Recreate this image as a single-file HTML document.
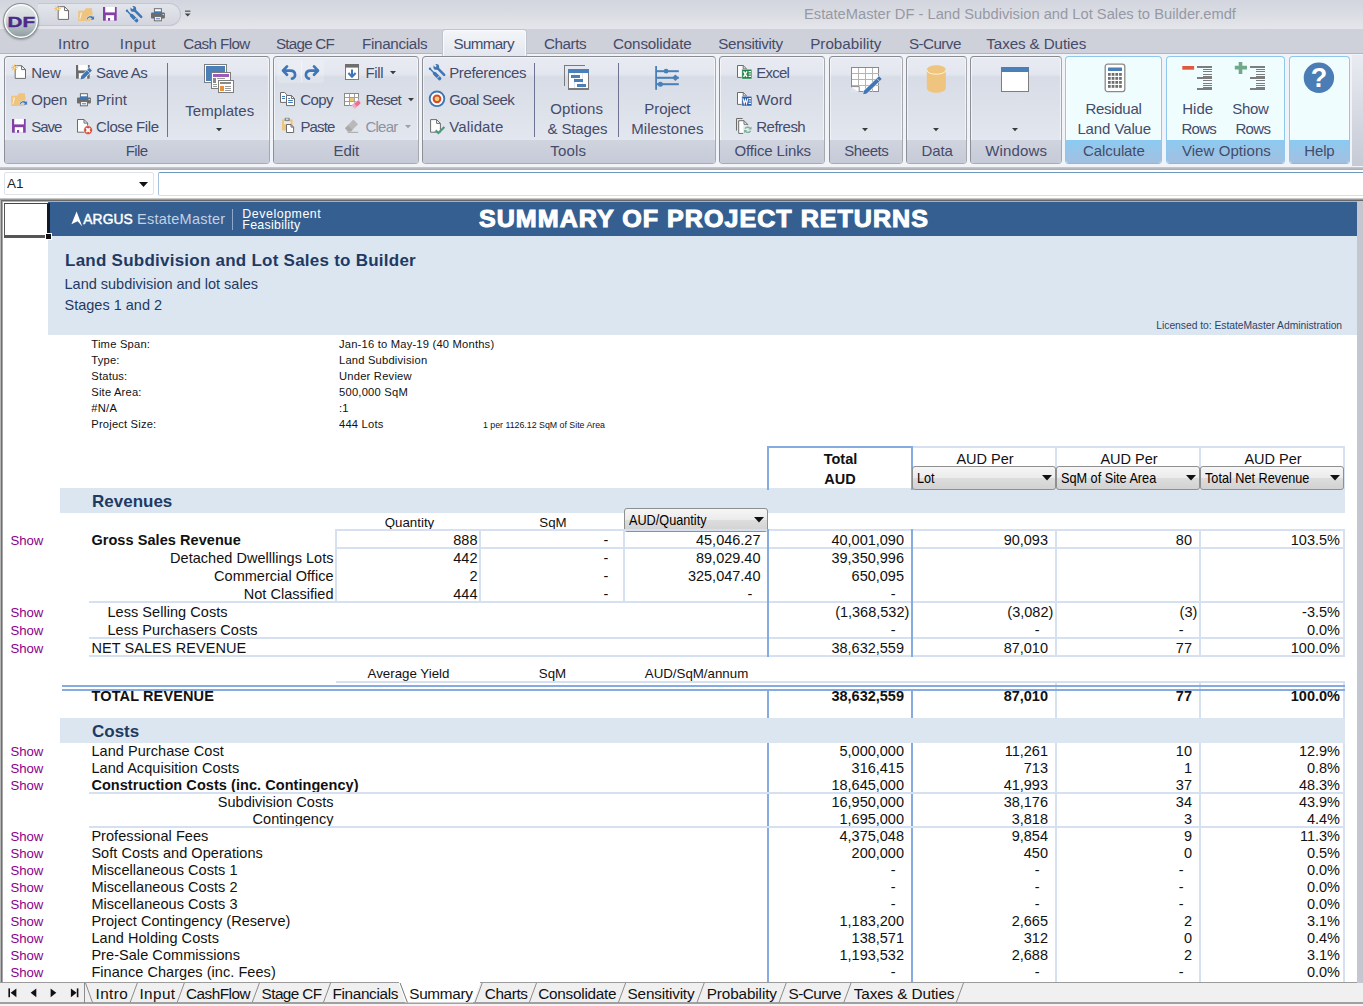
<!DOCTYPE html>
<html><head><meta charset="utf-8"><title>EstateMaster DF - Summary</title>
<style>
html,body{margin:0;padding:0}
body{width:1363px;height:1006px;overflow:hidden;position:relative;background:#fff;font-family:"Liberation Sans",sans-serif}
.t{position:absolute;white-space:pre;}
.r{position:absolute;}
svg{position:absolute;overflow:visible}
</style></head>
<body>
<div class="r" style="left:0px;top:0px;width:1363px;height:29px;background:linear-gradient(#d2d5dd 0,#dadce3 45%,#e4e6eb 100%);"></div>
<div class="r" style="left:0px;top:29px;width:1363px;height:25px;background:#ced1da;"></div>
<div class="r" style="left:0px;top:53px;width:1363px;height:1px;background:#b3b5bb;"></div>
<div class="r" style="left:0px;top:54px;width:1363px;height:113px;background:#f0f4f8;"></div>
<div class="r" style="left:1352px;top:55px;width:11px;height:111px;background:linear-gradient(#e8ebf1,#c6cad5);"></div>
<div class="r" style="left:0px;top:167px;width:1363px;height:3px;background:linear-gradient(#c8cacf,#a6a9b0);"></div>
<div class="r" style="left:0px;top:170px;width:1363px;height:28px;background:#fff;"></div>
<div class="t" style="left:804.00px;top:5px;font-size:14.7px;line-height:19px;color:#9699a5;letter-spacing:0.014px;">EstateMaster DF - Land Subdivision and Lot Sales to Builder.emdf</div>
<div class="r" style="left:38px;top:3px;width:143px;height:23px;background:linear-gradient(#e2e5eb,#d3d6de);border:1px solid #c2c6cf;border-left:none;border-radius:0 12px 12px 0;box-sizing:border-box"></div>
<div class="r" style="left:3.2px;top:2.8px;width:36px;height:36.6px;border-radius:50%;box-sizing:border-box;border:1px solid #8c8f93;background:linear-gradient(#e6eaec 0,#d4dadc 40%,#a9b4b8 75%,#8a999e 100%);box-shadow:inset 0 0 0 1.6px #fbfcfc, 0 1px 2px rgba(0,0,0,.25)"></div>
<div class="t" style="left:10.73px;top:12px;font-size:15.4px;line-height:20px;color:#4b2a8c;font-weight:700;transform:scaleX(1.34);-webkit-text-stroke:.4px #4b2a8c;">DF</div>
<div class="r" style="left:4px;top:172px;width:150px;height:23px;background:#fff;border:1px solid #dfe2e8;box-sizing:border-box;border-radius:2px"></div>
<div class="t" style="left:7.00px;top:175px;font-size:13.5px;line-height:18px;color:#222;">A1</div>
<svg style="left:139px;top:182px" width="10" height="6"><path d="M0 0h9L4.5 5z" fill="#111"/></svg>
<div class="r" style="left:158px;top:172px;width:1210px;height:24px;background:#fff;border:1px solid #a9c0dc;border-top-color:#6f9ac0;border-bottom-color:#d0e2f0;box-sizing:border-box;border-radius:2px"></div>
<div class="r" style="left:0px;top:201px;width:1363px;height:782px;background:#fff;"></div>
<div class="r" style="left:0px;top:198px;width:1363px;height:1px;background:#c8c8c8;"></div>
<div class="r" style="left:0px;top:199px;width:1363px;height:1px;background:#999;"></div>
<div class="r" style="left:0px;top:200px;width:1363px;height:1px;background:#686868;"></div>
<div class="r" style="left:0px;top:201px;width:1363px;height:1px;background:#b0b0b0;"></div>
<div class="r" style="left:0px;top:200px;width:1px;height:803px;background:#b5b5b5;"></div>
<div class="r" style="left:1px;top:200px;width:1px;height:803px;background:#6e6e6e;"></div>
<div class="r" style="left:2px;top:201px;width:1px;height:802px;background:#a8a8a8;"></div>
<div class="r" style="left:1357px;top:201px;width:6px;height:782px;background:#c4c7cf;"></div>
<div class="r" style="left:443px;top:30px;width:83px;height:26px;background:linear-gradient(#f3f5f8,#e3e7ee);border:1px solid #f8fbfd;border-bottom:none;border-radius:3px 3px 0 0;box-sizing:border-box;box-shadow:0 0 0 1px #bfc4ce"></div>
<div class="t" style="left:58.00px;top:34px;font-size:15.2px;line-height:20px;color:#454b6a;letter-spacing:0.202px;">Intro</div>
<div class="t" style="left:119.80px;top:34px;font-size:15.2px;line-height:20px;color:#454b6a;letter-spacing:0.484px;">Input</div>
<div class="t" style="left:183.30px;top:34px;font-size:15.2px;line-height:20px;color:#454b6a;letter-spacing:-0.594px;">Cash Flow</div>
<div class="t" style="left:276.00px;top:34px;font-size:15.2px;line-height:20px;color:#454b6a;letter-spacing:-0.770px;">Stage CF</div>
<div class="t" style="left:362.00px;top:34px;font-size:15.2px;line-height:20px;color:#454b6a;letter-spacing:-0.307px;">Financials</div>
<div class="t" style="left:453.50px;top:34px;font-size:15.2px;line-height:20px;color:#454b6a;letter-spacing:-0.641px;">Summary</div>
<div class="t" style="left:544.00px;top:34px;font-size:15.2px;line-height:20px;color:#454b6a;letter-spacing:-0.422px;">Charts</div>
<div class="t" style="left:613.00px;top:34px;font-size:15.2px;line-height:20px;color:#454b6a;letter-spacing:-0.156px;">Consolidate</div>
<div class="t" style="left:718.30px;top:34px;font-size:15.2px;line-height:20px;color:#454b6a;letter-spacing:-0.361px;">Sensitivity</div>
<div class="t" style="left:810.20px;top:34px;font-size:15.2px;line-height:20px;color:#454b6a;letter-spacing:0.016px;">Probability</div>
<div class="t" style="left:909.00px;top:34px;font-size:15.2px;line-height:20px;color:#454b6a;letter-spacing:-0.558px;">S-Curve</div>
<div class="t" style="left:986.30px;top:34px;font-size:15.2px;line-height:20px;color:#454b6a;letter-spacing:-0.100px;">Taxes &amp; Duties</div>
<div class="r" style="left:4px;top:56px;width:266px;height:108px;box-sizing:border-box;border:1px solid;border-color:#878a91 #a6a8ae #a9abb1 #8c8f96;border-radius:4px;background:linear-gradient(#e8ebf2 0,#e4e7ef 16%,#d7dce6 19%,#dce1ea 48%,#e2e7ef 77%);overflow:hidden;box-shadow:inset 0 0 0 1px rgba(255,255,255,.55)"><div class="r" style="left:0;top:83px;width:266px;height:24px;background:linear-gradient(#cfd4df,#c5cad7)"></div></div>
<div class="t" style="left:125.70px;top:141px;font-size:15px;line-height:20px;color:#454b6a;letter-spacing:-0.593px;">File</div>
<div class="r" style="left:273px;top:56px;width:146px;height:108px;box-sizing:border-box;border:1px solid;border-color:#878a91 #a6a8ae #a9abb1 #8c8f96;border-radius:4px;background:linear-gradient(#e8ebf2 0,#e4e7ef 16%,#d7dce6 19%,#dce1ea 48%,#e2e7ef 77%);overflow:hidden;box-shadow:inset 0 0 0 1px rgba(255,255,255,.55)"><div class="r" style="left:0;top:83px;width:146px;height:24px;background:linear-gradient(#cfd4df,#c5cad7)"></div></div>
<div class="t" style="left:333.50px;top:141px;font-size:15px;line-height:20px;color:#454b6a;letter-spacing:-0.090px;">Edit</div>
<div class="r" style="left:422px;top:56px;width:294px;height:108px;box-sizing:border-box;border:1px solid;border-color:#878a91 #a6a8ae #a9abb1 #8c8f96;border-radius:4px;background:linear-gradient(#e8ebf2 0,#e4e7ef 16%,#d7dce6 19%,#dce1ea 48%,#e2e7ef 77%);overflow:hidden;box-shadow:inset 0 0 0 1px rgba(255,255,255,.55)"><div class="r" style="left:0;top:83px;width:294px;height:24px;background:linear-gradient(#cfd4df,#c5cad7)"></div></div>
<div class="t" style="left:550.30px;top:141px;font-size:15px;line-height:20px;color:#454b6a;letter-spacing:0.174px;">Tools</div>
<div class="r" style="left:719px;top:56px;width:106px;height:108px;box-sizing:border-box;border:1px solid;border-color:#878a91 #a6a8ae #a9abb1 #8c8f96;border-radius:4px;background:linear-gradient(#e8ebf2 0,#e4e7ef 16%,#d7dce6 19%,#dce1ea 48%,#e2e7ef 77%);overflow:hidden;box-shadow:inset 0 0 0 1px rgba(255,255,255,.55)"><div class="r" style="left:0;top:83px;width:106px;height:24px;background:linear-gradient(#cfd4df,#c5cad7)"></div></div>
<div class="t" style="left:734.40px;top:141px;font-size:15px;line-height:20px;color:#454b6a;letter-spacing:-0.133px;">Office Links</div>
<div class="r" style="left:829px;top:56px;width:74px;height:108px;box-sizing:border-box;border:1px solid;border-color:#878a91 #a6a8ae #a9abb1 #8c8f96;border-radius:4px;background:linear-gradient(#e8ebf2 0,#e4e7ef 16%,#d7dce6 19%,#dce1ea 48%,#e2e7ef 77%);overflow:hidden;box-shadow:inset 0 0 0 1px rgba(255,255,255,.55)"><div class="r" style="left:0;top:83px;width:74px;height:24px;background:linear-gradient(#cfd4df,#c5cad7)"></div></div>
<div class="t" style="left:844.30px;top:141px;font-size:15px;line-height:20px;color:#454b6a;letter-spacing:-0.451px;">Sheets</div>
<div class="r" style="left:906px;top:56px;width:61px;height:108px;box-sizing:border-box;border:1px solid;border-color:#878a91 #a6a8ae #a9abb1 #8c8f96;border-radius:4px;background:linear-gradient(#e8ebf2 0,#e4e7ef 16%,#d7dce6 19%,#dce1ea 48%,#e2e7ef 77%);overflow:hidden;box-shadow:inset 0 0 0 1px rgba(255,255,255,.55)"><div class="r" style="left:0;top:83px;width:61px;height:24px;background:linear-gradient(#cfd4df,#c5cad7)"></div></div>
<div class="t" style="left:921.50px;top:141px;font-size:15px;line-height:20px;color:#454b6a;letter-spacing:-0.147px;">Data</div>
<div class="r" style="left:970px;top:56px;width:92px;height:108px;box-sizing:border-box;border:1px solid;border-color:#878a91 #a6a8ae #a9abb1 #8c8f96;border-radius:4px;background:linear-gradient(#e8ebf2 0,#e4e7ef 16%,#d7dce6 19%,#dce1ea 48%,#e2e7ef 77%);overflow:hidden;box-shadow:inset 0 0 0 1px rgba(255,255,255,.55)"><div class="r" style="left:0;top:83px;width:92px;height:24px;background:linear-gradient(#cfd4df,#c5cad7)"></div></div>
<div class="t" style="left:985.20px;top:141px;font-size:15px;line-height:20px;color:#454b6a;letter-spacing:0.163px;">Windows</div>
<div class="r" style="left:1065px;top:56px;width:97px;height:108px;box-sizing:border-box;border:1px solid;border-color:#8ec6ee #8ec6ee #aab0bc #8ec6ee;border-radius:4px;background:#f0fdff;overflow:hidden;box-shadow:inset 0 0 0 1px rgba(255,255,255,.55)"><div class="r" style="left:0;top:83px;width:97px;height:24px;background:linear-gradient(#8ccaf2,#a3bfde)"></div></div>
<div class="t" style="left:1083.00px;top:141px;font-size:15px;line-height:20px;color:#454b6a;letter-spacing:-0.094px;">Calculate</div>
<div class="r" style="left:1166px;top:56px;width:119px;height:108px;box-sizing:border-box;border:1px solid;border-color:#8ec6ee #8ec6ee #aab0bc #8ec6ee;border-radius:4px;background:#f0fdff;overflow:hidden;box-shadow:inset 0 0 0 1px rgba(255,255,255,.55)"><div class="r" style="left:0;top:83px;width:119px;height:24px;background:linear-gradient(#8ccaf2,#a3bfde)"></div></div>
<div class="t" style="left:1181.90px;top:141px;font-size:15px;line-height:20px;color:#454b6a;letter-spacing:0.074px;">View Options</div>
<div class="r" style="left:1289px;top:56px;width:61px;height:108px;box-sizing:border-box;border:1px solid;border-color:#8ec6ee #8ec6ee #aab0bc #8ec6ee;border-radius:4px;background:#f0fdff;overflow:hidden;box-shadow:inset 0 0 0 1px rgba(255,255,255,.55)"><div class="r" style="left:0;top:83px;width:61px;height:24px;background:linear-gradient(#8ccaf2,#a3bfde)"></div></div>
<div class="t" style="left:1304.20px;top:141px;font-size:15px;line-height:20px;color:#454b6a;letter-spacing:-0.115px;">Help</div>
<div class="r" style="left:167px;top:63px;width:1px;height:74px;background:#6d7391;"></div>
<div class="r" style="left:534px;top:63px;width:1px;height:74px;background:#6d7391;"></div>
<div class="r" style="left:618px;top:63px;width:1px;height:74px;background:#6d7391;"></div>
<div class="t" style="left:31.20px;top:63px;font-size:15px;line-height:20px;color:#454b6a;letter-spacing:-0.205px;">New</div>
<div class="t" style="left:31.20px;top:90px;font-size:15px;line-height:20px;color:#454b6a;letter-spacing:-0.176px;">Open</div>
<div class="t" style="left:31.20px;top:117px;font-size:15px;line-height:20px;color:#454b6a;letter-spacing:-1.051px;">Save</div>
<div class="t" style="left:96.10px;top:63px;font-size:15px;line-height:20px;color:#454b6a;letter-spacing:-0.578px;">Save As</div>
<div class="t" style="left:96.10px;top:90px;font-size:15px;line-height:20px;color:#454b6a;letter-spacing:0.011px;">Print</div>
<div class="t" style="left:96.10px;top:117px;font-size:15px;line-height:20px;color:#454b6a;letter-spacing:-0.419px;">Close File</div>
<div class="t" style="left:300.30px;top:90px;font-size:15px;line-height:20px;color:#454b6a;letter-spacing:-0.583px;">Copy</div>
<div class="t" style="left:300.50px;top:117px;font-size:15px;line-height:20px;color:#454b6a;letter-spacing:-0.892px;">Paste</div>
<div class="t" style="left:365.40px;top:63px;font-size:15px;line-height:20px;color:#454b6a;letter-spacing:-0.318px;">Fill</div>
<div class="t" style="left:365.40px;top:90px;font-size:15px;line-height:20px;color:#454b6a;letter-spacing:-0.717px;">Reset</div>
<div class="t" style="left:449.20px;top:63px;font-size:15px;line-height:20px;color:#454b6a;letter-spacing:-0.352px;">Preferences</div>
<div class="t" style="left:449.20px;top:90px;font-size:15px;line-height:20px;color:#454b6a;letter-spacing:-0.550px;">Goal Seek</div>
<div class="t" style="left:449.20px;top:117px;font-size:15px;line-height:20px;color:#454b6a;letter-spacing:0.138px;">Validate</div>
<div class="t" style="left:756.30px;top:63px;font-size:15px;line-height:20px;color:#454b6a;letter-spacing:-0.797px;">Excel</div>
<div class="t" style="left:756.30px;top:90px;font-size:15px;line-height:20px;color:#454b6a;letter-spacing:0.080px;">Word</div>
<div class="t" style="left:756.30px;top:117px;font-size:15px;line-height:20px;color:#454b6a;letter-spacing:-0.519px;">Refresh</div>
<div class="t" style="left:365.40px;top:117px;font-size:15px;line-height:20px;color:#8d92a3;letter-spacing:-0.732px;">Clear</div>
<div class="t" style="left:185.30px;top:101px;font-size:15px;line-height:20px;color:#454b6a;letter-spacing:0.069px;">Templates</div>
<div class="t" style="left:550.30px;top:99px;font-size:15px;line-height:20px;color:#454b6a;letter-spacing:0.157px;">Options</div>
<div class="t" style="left:547.50px;top:119px;font-size:15px;line-height:20px;color:#454b6a;letter-spacing:-0.134px;">&amp; Stages</div>
<div class="t" style="left:644.30px;top:99px;font-size:15px;line-height:20px;color:#454b6a;letter-spacing:-0.084px;">Project</div>
<div class="t" style="left:631.30px;top:119px;font-size:15px;line-height:20px;color:#454b6a;letter-spacing:0.050px;">Milestones</div>
<div class="t" style="left:1085.50px;top:99px;font-size:15px;line-height:20px;color:#454b6a;letter-spacing:-0.297px;">Residual</div>
<div class="t" style="left:1077.40px;top:119px;font-size:15px;line-height:20px;color:#454b6a;letter-spacing:-0.110px;">Land Value</div>
<div class="t" style="left:1182.30px;top:99px;font-size:15px;line-height:20px;color:#454b6a;letter-spacing:-0.015px;">Hide</div>
<div class="t" style="left:1181.60px;top:119px;font-size:15px;line-height:20px;color:#454b6a;letter-spacing:-0.804px;">Rows</div>
<div class="t" style="left:1232.20px;top:99px;font-size:15px;line-height:20px;color:#454b6a;letter-spacing:-0.258px;">Show</div>
<div class="t" style="left:1235.40px;top:119px;font-size:15px;line-height:20px;color:#454b6a;letter-spacing:-0.629px;">Rows</div>
<svg style="left:53.7px;top:5.2px" width="16" height="16" viewBox="0 0 16 16"><path d="M4.2 1.7H10.6L14.5 5.6V14.4H4.2Z" fill="#fff" stroke="#6c6c6c"/><path d="M10.6 1.7V5.6H14.5" fill="none" stroke="#6c6c6c"/><g stroke="#f0bd6a" stroke-width="1"><line x1="3.5" y1="3.7" x2="6.90" y2="3.70"/><line x1="3.5" y1="3.7" x2="0.10" y2="3.70"/><line x1="3.5" y1="3.7" x2="3.50" y2="7.10"/><line x1="3.5" y1="3.7" x2="3.50" y2="0.30"/><line x1="3.5" y1="3.7" x2="5.88" y2="6.08"/><line x1="3.5" y1="3.7" x2="1.12" y2="6.08"/><line x1="3.5" y1="3.7" x2="5.88" y2="1.32"/><line x1="3.5" y1="3.7" x2="1.12" y2="1.32"/></g><circle cx="3.5" cy="3.7" r="1.7" fill="#f0bd6a"/><circle cx="3.5" cy="3.7" r=".7" fill="#fbe9c8"/></svg>
<svg style="left:78px;top:6.6px" width="17" height="16" viewBox="0 0 17 16"><path d="M0.2 14.1V3.8H6.2L7.9 1.2H14V4.6H14.6L14.2 14.1Z" fill="#eec47e"/><path d="M1.4 12.6L2.6 5.6H4L2.2 12.6Z" fill="#fbf1de"/><path d="M8.2 13.2C8.6 9 12.6 7.6 15.2 9.6L16.4 8.2V13H11.8L13.4 11.4C11.8 10.2 9.8 11 9.6 13.2Z" fill="#3f76b5" stroke="#e4e8f0" stroke-width=".7"/></svg>
<svg style="left:102.3px;top:6.1px" width="16" height="16" viewBox="0 0 16 16"><rect x="1" y="1" width="13.7" height="13.7" fill="#8241a6"/><rect x="3.2" y="1" width="9.7" height="5.4" fill="#fff"/><rect x="3.8" y="9.2" width="8.3" height="5.5" fill="#fff"/><rect x="6" y="12" width="2.1" height="2.7" fill="#8241a6"/></svg>
<svg style="left:126px;top:5.9px" width="17" height="17" viewBox="0 0 17 17"><g fill="none" stroke="#3f76b5" stroke-linecap="round"><path d="M9 4.6L15.2 10.8" stroke-width="2.5"/><path d="M1 4.8L5 9" stroke-width="1.4"/><path d="M5.6 9.6L10.6 14.6" stroke-width="3.5"/></g><circle cx="7.3" cy="2.9" r="2.9" fill="#3f76b5"/><path d="M7 2.6L4.6 -0.4" stroke="#e3e7ee" stroke-width="2"/><circle cx="1" cy="4.7" r="1.2" fill="#3f76b5"/><path d="M8 14.4L10.5 11.9" stroke="#e8ebf1" stroke-width=".9"/></svg>
<svg style="left:150px;top:7px" width="16" height="16" viewBox="0 0 16 16"><rect x="1" y="5.4" width="13.9" height="6" rx="1" fill="#6c6c6c"/><rect x="4.4" y="1.7" width="7" height="5" fill="#fff" stroke="#6c6c6c"/><rect x="4" y="4.3" width="7.8" height="2.6" fill="#3f76b5"/><rect x="4.4" y="9.6" width="7" height="4.2" fill="#fff" stroke="#6c6c6c"/><rect x="5.8" y="11.3" width="4.2" height="1" fill="#3f76b5"/><circle cx="13.2" cy="7.6" r=".7" fill="#fff"/></svg>
<svg style="left:184px;top:9px" width="8" height="9" viewBox="0 0 8 9"><rect x="1" y="1.6" width="5.4" height="1.1" fill="#444"/><path d="M0.8 4.4H6.6L3.7 7.6Z" fill="#444"/></svg>
<svg style="left:11px;top:64px" width="16" height="16" viewBox="0 0 16 16"><path d="M4.2 1.7H10.6L14.5 5.6V14.4H4.2Z" fill="#fff" stroke="#6c6c6c"/><path d="M10.6 1.7V5.6H14.5" fill="none" stroke="#6c6c6c"/><g stroke="#f0bd6a" stroke-width="1"><line x1="3.5" y1="3.7" x2="6.90" y2="3.70"/><line x1="3.5" y1="3.7" x2="0.10" y2="3.70"/><line x1="3.5" y1="3.7" x2="3.50" y2="7.10"/><line x1="3.5" y1="3.7" x2="3.50" y2="0.30"/><line x1="3.5" y1="3.7" x2="5.88" y2="6.08"/><line x1="3.5" y1="3.7" x2="1.12" y2="6.08"/><line x1="3.5" y1="3.7" x2="5.88" y2="1.32"/><line x1="3.5" y1="3.7" x2="1.12" y2="1.32"/></g><circle cx="3.5" cy="3.7" r="1.7" fill="#f0bd6a"/><circle cx="3.5" cy="3.7" r=".7" fill="#fbe9c8"/></svg>
<svg style="left:10.9px;top:92px" width="17" height="16" viewBox="0 0 17 16"><path d="M0.2 14.1V3.8H6.2L7.9 1.2H14V4.6H14.6L14.2 14.1Z" fill="#eec47e"/><path d="M1.4 12.6L2.6 5.6H4L2.2 12.6Z" fill="#fbf1de"/><path d="M8.2 13.2C8.6 9 12.6 7.6 15.2 9.6L16.4 8.2V13H11.8L13.4 11.4C11.8 10.2 9.8 11 9.6 13.2Z" fill="#3f76b5" stroke="#e4e8f0" stroke-width=".7"/></svg>
<svg style="left:11.2px;top:118px" width="16" height="16" viewBox="0 0 16 16"><rect x="1" y="1" width="13.7" height="13.7" fill="#8241a6"/><rect x="3.2" y="1" width="9.7" height="5.4" fill="#fff"/><rect x="3.8" y="9.2" width="8.3" height="5.5" fill="#fff"/><rect x="6" y="12" width="2.1" height="2.7" fill="#8241a6"/></svg>
<svg style="left:75px;top:64.2px" width="16" height="16" viewBox="0 0 16 16"><rect x="1" y="1" width="13.7" height="13.7" fill="#6c6c6c"/><rect x="3.2" y="1" width="9.7" height="5.4" fill="#fff"/><rect x="3.8" y="9.2" width="8.3" height="5.5" fill="#fff"/><rect x="6" y="12" width="2.1" height="2.7" fill="#6c6c6c"/></svg>
<svg style="left:75px;top:64.2px" width="18" height="17" viewBox="0 0 18 17"><path d="M5.60 15.40L9.06 14.59L16.96 6.53L14.24 3.87L6.34 11.93Z" fill="#3f76b5" stroke="#dfe3eb" stroke-width="1.2" paint-order="stroke"/><path d="M14.72 8.82L12.00 6.15" stroke="#dfe3eb" stroke-width=".8"/></svg>
<svg style="left:76px;top:92px" width="16" height="16" viewBox="0 0 16 16"><rect x="1" y="5.4" width="13.9" height="6" rx="1" fill="#6c6c6c"/><rect x="4.4" y="1.7" width="7" height="5" fill="#fff" stroke="#6c6c6c"/><rect x="4" y="4.3" width="7.8" height="2.6" fill="#3f76b5"/><rect x="4.4" y="9.6" width="7" height="4.2" fill="#fff" stroke="#6c6c6c"/><rect x="5.8" y="11.3" width="4.2" height="1" fill="#3f76b5"/><circle cx="13.2" cy="7.6" r=".7" fill="#fff"/></svg>
<svg style="left:76px;top:118px" width="18" height="18" viewBox="0 0 18 18"><path d="M1.5 1.5H8L11.6 5.1V14.2H1.5Z" fill="#fff" stroke="#6c6c6c"/><path d="M8 1.5V5.1H11.6" fill="none" stroke="#6c6c6c"/><circle cx="12.1" cy="12.1" r="4.3" fill="#d8452d" stroke="#e4e8f0" stroke-width=".6"/><path d="M10.2 10.2L14 14M14 10.2L10.2 14" stroke="#fff" stroke-width="1.9"/></svg>
<svg style="left:203px;top:63px" width="33" height="31" viewBox="0 0 33 31"><g shape-rendering="crispEdges"><rect x="1.5" y="1.5" width="22" height="18" fill="#fff" stroke="#7d7d7d"/><rect x="3" y="3" width="19" height="15" fill="#4a7fb8"/><rect x="8.5" y="9.5" width="19" height="16" fill="#fff" stroke="#7d7d7d"/><rect x="10" y="11" width="16" height="3" fill="#9a5cb6"/><rect x="10" y="15" width="3" height="5" fill="#8a8a8a"/><rect x="14" y="15" width="8" height="1" fill="#9a9a9a"/><rect x="10" y="21" width="4" height="1" fill="#9a9a9a"/><rect x="10" y="23" width="4" height="1" fill="#9a9a9a"/><rect x="15.5" y="17.5" width="15" height="12" fill="#fff" stroke="#7d7d7d"/><rect x="17" y="19" width="11" height="2" fill="#8a8a8a"/><rect x="17" y="23" width="4" height="5" fill="#e8913e"/><rect x="22" y="23" width="6" height="1" fill="#9a9a9a"/><rect x="22" y="25" width="6" height="1" fill="#9a9a9a"/><rect x="22" y="27" width="6" height="1" fill="#9a9a9a"/></g></svg>
<svg style="left:215.7px;top:128px" width="7" height="4" viewBox="0 0 7 4"><path d="M0 0H6L3 3.2Z" fill="#3a3a3a"/></svg>
<div class="r" style="left:277px;top:60px;width:47px;height:23px;background:rgba(255,255,255,.18);border-radius:2px"></div>
<div class="r" style="left:301px;top:61px;width:1px;height:21px;background:rgba(255,255,255,.45);"></div>
<svg style="left:281px;top:64px" width="16" height="16" viewBox="0 0 16 16"><path d="M6 2.4L2 6.6L6 10.8" fill="none" stroke="#3f76b5" stroke-width="2.7" stroke-linejoin="round" stroke-linecap="round"/><path d="M2.6 6.6H9.6C15.2 6.6 15.4 14 11 14.6" fill="none" stroke="#3f76b5" stroke-width="2.7" stroke-linecap="round"/></svg>
<svg style="left:304px;top:64px" width="16" height="16" viewBox="0 0 16 16"><path d="M10 2.4L14 6.6L10 10.8" fill="none" stroke="#3f76b5" stroke-width="2.7" stroke-linejoin="round" stroke-linecap="round"/><path d="M13.4 6.6H6.4C0.8 6.6 0.6 14 5 14.6" fill="none" stroke="#3f76b5" stroke-width="2.7" stroke-linecap="round"/></svg>
<svg style="left:344px;top:63px" width="16" height="18" viewBox="0 0 16 18"><rect x="1.5" y="1.5" width="13" height="15" fill="#fff" stroke="#7a7a7a"/><rect x="1" y="1" width="14" height="3.6" fill="#6e6e6e"/><path d="M8 6.4V13.4M4.4 10L8 13.8L11.6 10" fill="none" stroke="#3f76b5" stroke-width="2"/></svg>
<svg style="left:390px;top:71px" width="7" height="4" viewBox="0 0 7 4"><path d="M0 0H6L3 3.2Z" fill="#3a3a3a"/></svg>
<svg style="left:279px;top:91px" width="17" height="16" viewBox="0 0 17 16"><path d="M1.5 1.5H5.6L8.4 4.2V11.4H1.5Z" fill="#fff" stroke="#6c6c6c"/><path d="M3 5.5H6M3 7.5H6" stroke="#3f76b5"/><path d="M7.5 4.5H12.4L15.5 7.6V14.6H7.5Z" fill="#fff" stroke="#6c6c6c"/><path d="M12.4 4.5V7.6H15.5" fill="none" stroke="#6c6c6c"/><path d="M9.2 9.5H13.8M9.2 11.5H13.8M9.2 7.5H11" stroke="#3f76b5"/></svg>
<svg style="left:343px;top:92px" width="18" height="16" viewBox="0 0 18 16"><g shape-rendering="crispEdges"><rect x="1.5" y="1.5" width="14" height="12" fill="#fff" stroke="#8a8a8a"/><path d="M6.5 1.5V13.5M11.5 1.5V13.5M1.5 5.5H15.5M1.5 9.5H15.5" stroke="#a0a0a0" fill="none"/><rect x="7" y="6" width="4" height="3" fill="#f0c36e"/></g><g transform="rotate(-40 13.6 12.2)"><rect x="9.2" y="9.9" width="8.8" height="4.6" rx="1.2" fill="#ee6d93" stroke="#e4e8f0" stroke-width=".7"/><rect x="9.2" y="9.9" width="3" height="4.6" rx="1" fill="#f6a9c0"/></g></svg>
<svg style="left:407.6px;top:98px" width="7" height="4" viewBox="0 0 7 4"><path d="M0 0H6L3 3.2Z" fill="#3a3a3a"/></svg>
<svg style="left:281px;top:117px" width="15" height="17" viewBox="0 0 15 17"><rect x="1" y="2.4" width="10.6" height="11" fill="#eec47e"/><rect x="3.6" y="0.8" width="5.2" height="3.4" rx="1" fill="#8a8a8a"/><rect x="5" y="1.6" width="2.4" height="1.2" fill="#e4e8f0"/><rect x="3" y="4.2" width="6.6" height="3" fill="#e4e8f0"/><path d="M5.5 7.5H10L12.6 10.1V15.5H5.5Z" fill="#fff" stroke="#6c6c6c"/><path d="M10 7.5V10.1H12.6" fill="none" stroke="#6c6c6c"/></svg>
<svg style="left:343px;top:118px" width="17" height="16" viewBox="0 0 17 16"><path d="M2 10L10.4 1.6L15 6.2L8 13.2H4.6Z" fill="#b9b9b9"/><path d="M2.2 10.2L5 7.4L9.6 12L8 13.4H4.8Z" fill="#a9a9a9"/><rect x="4.6" y="13.8" width="10.6" height="1" fill="#a5a5a5"/></svg>
<svg style="left:404.8px;top:125px" width="7" height="4" viewBox="0 0 7 4"><path d="M0 0H6L3 3.2Z" fill="#9a9ead"/></svg>
<svg style="left:428.9px;top:64.1px" width="17" height="17" viewBox="0 0 17 17"><g fill="none" stroke="#3f76b5" stroke-linecap="round"><path d="M9 4.6L15.2 10.8" stroke-width="2.5"/><path d="M1 4.8L5 9" stroke-width="1.4"/><path d="M5.6 9.6L10.6 14.6" stroke-width="3.5"/></g><circle cx="7.3" cy="2.9" r="2.9" fill="#3f76b5"/><path d="M7 2.6L4.6 -0.4" stroke="#e3e7ee" stroke-width="2"/><circle cx="1" cy="4.7" r="1.2" fill="#3f76b5"/><path d="M8 14.4L10.5 11.9" stroke="#e8ebf1" stroke-width=".9"/></svg>
<svg style="left:428px;top:90px" width="18" height="18" viewBox="0 0 18 18"><circle cx="9" cy="8.8" r="7.3" fill="#fff" stroke="#3f76b5" stroke-width="1.9"/><circle cx="9" cy="8.8" r="3.4" fill="#f0d070" stroke="#d8492a" stroke-width="2"/></svg>
<svg style="left:429px;top:118px" width="18" height="18" viewBox="0 0 18 18"><path d="M1.6 1.6H7.6L11.4 5.4V14.2H1.6Z" fill="#fff" stroke="#6c6c6c"/><path d="M7.6 1.6V5.4H11.4" fill="none" stroke="#6c6c6c"/><path d="M6.6 12.4L9.4 15L15.4 9" fill="none" stroke="#4b9a7c" stroke-width="2.2"/><path d="M5.6 13L7.2 14.6" stroke="#9a9a9a" stroke-width="1"/></svg>
<svg style="left:564px;top:65px" width="26" height="26" viewBox="0 0 26 26"><g shape-rendering="crispEdges"><path d="M0.5 21V0.5H21" fill="none" stroke="#7a7a7a"/><rect x="4.5" y="4.5" width="20" height="19" fill="#fff" stroke="#7a7a7a"/><rect x="4" y="23" width="21" height="2" fill="#7a7a7a"/><rect x="4" y="4" width="21" height="4" fill="#4a7fb8"/><path d="M10.5 8V23M18.5 8V23" stroke="#dfe6ef"/><rect x="7" y="10" width="9" height="3" fill="#4a7fb8"/><rect x="10" y="14" width="9" height="3" fill="#4a7fb8"/><rect x="13" y="19" width="9" height="3" fill="#4a7fb8"/></g></svg>
<svg style="left:654px;top:65px" width="27" height="26" viewBox="0 0 27 26"><rect x="1.2" y="1" width="1.8" height="23.8" fill="#4a7fb8"/><g fill="#4a7fb8"><rect x="3" y="5.2" width="21.8" height="2"/><rect x="3" y="11.8" width="21.8" height="2"/><rect x="3" y="18.2" width="21.8" height="2"/><circle cx="12.1" cy="6.2" r="2.4"/><path d="M21.4 9.6L24.8 12.8L21.4 16L18 12.8Z"/><circle cx="6.4" cy="19.2" r="2.5"/></g></svg>
<svg style="left:736px;top:64px" width="17" height="16" viewBox="0 0 17 16"><path d="M1.5 1.5H7.2L10.6 4.9V13.4H1.5Z" fill="#fff" stroke="#6c6c6c"/><path d="M7.2 1.5V4.9H10.6" fill="none" stroke="#6c6c6c"/><rect x="5.9" y="5.2" width="10" height="9.8" fill="#1f8448" stroke="#e4e8f0" stroke-width=".5"/><path d="M7.6 7.4L11 12.8M11 7.4L7.6 12.8" stroke="#fff" stroke-width="1.5"/><path d="M12.6 7.6H15M12.6 10H15M12.6 12.4H15" stroke="#fff" stroke-width="1.2"/></svg>
<svg style="left:736px;top:91px" width="17" height="16" viewBox="0 0 17 16"><path d="M1.5 1.5H7.2L10.6 4.9V13.4H1.5Z" fill="#fff" stroke="#6c6c6c"/><path d="M7.2 1.5V4.9H10.6" fill="none" stroke="#6c6c6c"/><rect x="5.9" y="5.2" width="10" height="9.8" fill="#2b5dab" stroke="#e4e8f0" stroke-width=".5"/><path d="M7 7.4L8.2 12.6L9.4 8.6L10.6 12.6L11.8 7.4" fill="none" stroke="#fff" stroke-width="1.1"/><path d="M12.6 7.6H15M12.6 10H15M12.6 12.4H15" stroke="#fff" stroke-width="1.2"/></svg>
<svg style="left:735px;top:117px" width="18" height="18" viewBox="0 0 18 18"><path d="M1.5 13.6V1.5H7.6" fill="none" stroke="#6c6c6c"/><path d="M3.7 3.7H9L12.6 7.3V16.4H3.7Z" fill="#fff" stroke="#6c6c6c"/><path d="M9 3.7V7.3H12.6" fill="none" stroke="#6c6c6c"/><rect x="8.2" y="8.2" width="9" height="9" fill="#e4e8f0"/><path d="M9.4 11.6C10.2 9 14 8.8 15.4 10.6L16.6 9.4V12.6H13.4L14.4 11.6C13.4 10.6 11.4 10.6 10.8 12Z" fill="#7fb39b"/><path d="M16.2 14C15.4 16.6 11.6 16.8 10.2 15L9 16.2V13H12.2L11.2 14C12.2 15 14.2 15 14.8 13.6Z" fill="#7fb39b"/></svg>
<svg style="left:850px;top:66px" width="32" height="30" viewBox="0 0 32 30"><g shape-rendering="crispEdges"><path d="M1.5 1.5H28.5V25.5H8.5L1.5 25.5Z" fill="#fff" stroke="#8a8a8a"/><path d="M8.5 1.5V25.5M15.5 1.5V25.5M22.5 1.5V25.5M1.5 7.5H28.5M1.5 13.5H28.5M1.5 19.5H28.5" stroke="#b4b4b4" fill="none"/></g><path d="M1 21L9.4 26.2H1Z" fill="#dfe3eb"/><path d="M1.5 20.6H9.2V26" fill="#fff" stroke="#8a8a8a" stroke-width="1"/><path d="M13.20 28.20L16.68 27.48L31.72 12.97L29.08 10.23L14.04 24.75Z" fill="#3f76b5" stroke="#dfe3eb" stroke-width="1.2" paint-order="stroke"/><path d="M29.42 15.19L26.78 12.46" stroke="#dfe3eb" stroke-width=".8"/></svg>
<svg style="left:861.8px;top:128px" width="7" height="4" viewBox="0 0 7 4"><path d="M0 0H6L3 3.2Z" fill="#3a3a3a"/></svg>
<svg style="left:926px;top:64px" width="21" height="30" viewBox="0 0 21 30"><path d="M0.8 6C0.8 -0.4 19.8 -0.4 19.8 6V24C19.8 30.4 0.8 30.4 0.8 24Z" fill="#eec47e"/><path d="M0.8 6C0.8 11.6 19.8 11.6 19.8 6" fill="none" stroke="#fbf3e2" stroke-width="1"/></svg>
<svg style="left:932.6px;top:128px" width="7" height="4" viewBox="0 0 7 4"><path d="M0 0H6L3 3.2Z" fill="#3a3a3a"/></svg>
<svg style="left:1000px;top:66px" width="30" height="27" viewBox="0 0 30 27"><g shape-rendering="crispEdges"><rect x="1.5" y="1.5" width="27" height="24" fill="#fff" stroke="#7d7d7d"/><rect x="1" y="1" width="28" height="5" fill="#4a7fb8"/></g></svg>
<svg style="left:1011.8px;top:128px" width="7" height="4" viewBox="0 0 7 4"><path d="M0 0H6L3 3.2Z" fill="#3a3a3a"/></svg>
<svg style="left:1104px;top:63px" width="22" height="30" viewBox="0 0 22 30"><rect x="1.2" y="1.2" width="19.6" height="27.4" rx="2.4" fill="#fff" stroke="#8a8a8a" stroke-width="1.3"/><rect x="4" y="4.4" width="14" height="3.6" rx=".6" fill="#4a7fb8"/><g fill="#6e6e6e"><rect x="4.0" y="10" width="2.7" height="2.8"/><rect x="4.0" y="14" width="2.7" height="2.8"/><rect x="4.0" y="18" width="2.7" height="2.8"/><rect x="4.0" y="22" width="2.7" height="2.8"/><rect x="7.7" y="10" width="2.7" height="2.8"/><rect x="7.7" y="14" width="2.7" height="2.8"/><rect x="7.7" y="18" width="2.7" height="2.8"/><rect x="7.7" y="22" width="2.7" height="2.8"/><rect x="11.4" y="10" width="2.7" height="2.8"/><rect x="11.4" y="14" width="2.7" height="2.8"/><rect x="11.4" y="18" width="2.7" height="2.8"/><rect x="11.4" y="22" width="2.7" height="2.8"/><rect x="15.1" y="10" width="2.7" height="2.8"/><rect x="15.1" y="14" width="2.7" height="2.8"/><rect x="15.1" y="18" width="2.7" height="2.8"/><rect x="15.1" y="22" width="2.7" height="2.8"/></g></svg>
<svg style="left:1182px;top:65px" width="13" height="6" viewBox="0 0 13 6"><rect x="0.3" y="1" width="11.8" height="3.7" fill="#e05b3d"/></svg>
<svg style="left:1196.3px;top:65.6px" width="17" height="25" viewBox="0 0 17 25"><g fill="#7d7d7d" shape-rendering="crispEdges"><rect x="0.6" y="0.4" width="15" height="2"/><rect x="0.6" y="11.4" width="15" height="2"/><rect x="0.6" y="22.4" width="15" height="2"/><rect x="7" y="3.2" width="8.6" height="1"/><rect x="7" y="5.4" width="8.6" height="1"/><rect x="7" y="7.6" width="8.6" height="1"/><rect x="7" y="9.6" width="8.6" height="1"/><rect x="7" y="14.4" width="8.6" height="1"/><rect x="7" y="16.6" width="8.6" height="1"/><rect x="7" y="18.6" width="8.6" height="1"/><rect x="7" y="20.6" width="8.6" height="1"/></g></svg>
<svg style="left:1234px;top:61px" width="14" height="14" viewBox="0 0 14 14"><path d="M4.7 1H8.3V4.8H13V8.4H8.3V13H4.7V8.4H0.8V4.8H4.7Z" fill="#6fa98a"/></svg>
<svg style="left:1249.4px;top:65.6px" width="17" height="25" viewBox="0 0 17 25"><g fill="#7d7d7d" shape-rendering="crispEdges"><rect x="0.6" y="0.4" width="15" height="2"/><rect x="0.6" y="11.4" width="15" height="2"/><rect x="0.6" y="22.4" width="15" height="2"/><rect x="7" y="3.2" width="8.6" height="1"/><rect x="7" y="5.4" width="8.6" height="1"/><rect x="7" y="7.6" width="8.6" height="1"/><rect x="7" y="9.6" width="8.6" height="1"/><rect x="7" y="14.4" width="8.6" height="1"/><rect x="7" y="16.6" width="8.6" height="1"/><rect x="7" y="18.6" width="8.6" height="1"/><rect x="7" y="20.6" width="8.6" height="1"/></g></svg>
<svg style="left:1303px;top:62px" width="32" height="32" viewBox="0 0 32 32"><circle cx="15.9" cy="15.8" r="15.2" fill="#4a7cb5"/></svg>
<div class="t" style="left:1310.65px;top:61px;font-size:27px;line-height:35px;color:#fff;font-weight:700;">?</div>
<div class="r" style="left:48px;top:202px;width:1309px;height:34px;background:#365f91;"></div>
<div class="r" style="left:48px;top:236px;width:1309px;height:99px;background:#dce6f1;"></div>
<div class="r" style="left:4px;top:203px;width:46px;height:35px;background:#fff;box-sizing:border-box;border-top:1px solid #444;border-left:1px solid #555;border-bottom:3px solid #555;border-right:3px solid #131a26"></div>
<div class="r" style="left:45px;top:233px;width:7px;height:7px;background:#fff;"></div>
<div class="r" style="left:46px;top:234px;width:5px;height:5px;background:#111;"></div>
<div class="t" style="left:478.50px;top:204px;font-size:23px;line-height:30px;color:#fff;font-weight:700;letter-spacing:0.937px;-webkit-text-stroke:1px #fff;transform:scaleX(1.09);transform-origin:0 0;">SUMMARY OF PROJECT RETURNS</div>
<div class="t" style="left:65.00px;top:250px;font-size:17px;line-height:22px;color:#1f3a63;font-weight:700;letter-spacing:0.244px;">Land Subdivision and Lot Sales to Builder</div>
<div class="t" style="left:64.50px;top:275px;font-size:14.5px;line-height:19px;color:#1f3a63;">Land subdivision and lot sales</div>
<div class="t" style="left:64.50px;top:296px;font-size:14.5px;line-height:19px;color:#1f3a63;">Stages 1 and 2</div>
<div class="t" style="left:1156.30px;top:319px;font-size:10.3px;line-height:13px;color:#2c4468;letter-spacing:-0.020px;">Licensed to: EstateMaster Administration</div>
<div class="t" style="left:91.30px;top:337px;font-size:11.2px;line-height:15px;color:#111;letter-spacing:0.206px;">Time Span:</div>
<div class="t" style="left:339.00px;top:337px;font-size:11.2px;line-height:15px;color:#111;letter-spacing:0.195px;">Jan-16 to May-19 (40 Months)</div>
<div class="t" style="left:91.30px;top:353px;font-size:11.2px;line-height:15px;color:#111;letter-spacing:0.197px;">Type:</div>
<div class="t" style="left:339.00px;top:353px;font-size:11.2px;line-height:15px;color:#111;letter-spacing:0.193px;">Land Subdivision</div>
<div class="t" style="left:91.30px;top:369px;font-size:11.2px;line-height:15px;color:#111;letter-spacing:0.181px;">Status:</div>
<div class="t" style="left:339.00px;top:369px;font-size:11.2px;line-height:15px;color:#111;letter-spacing:0.212px;">Under Review</div>
<div class="t" style="left:91.30px;top:385px;font-size:11.2px;line-height:15px;color:#111;letter-spacing:0.177px;">Site Area:</div>
<div class="t" style="left:339.00px;top:385px;font-size:11.2px;line-height:15px;color:#111;letter-spacing:0.219px;">500,000 SqM</div>
<div class="t" style="left:91.30px;top:401px;font-size:11.2px;line-height:15px;color:#111;letter-spacing:0.227px;">#N/A</div>
<div class="t" style="left:339.00px;top:401px;font-size:11.2px;line-height:15px;color:#111;letter-spacing:0.164px;">:1</div>
<div class="t" style="left:91.30px;top:417px;font-size:11.2px;line-height:15px;color:#111;letter-spacing:0.175px;">Project Size:</div>
<div class="t" style="left:339.00px;top:417px;font-size:11.2px;line-height:15px;color:#111;letter-spacing:0.195px;">444 Lots</div>
<div class="t" style="left:483.00px;top:420px;font-size:8.8px;line-height:11px;color:#111;letter-spacing:-0.004px;">1 per 1126.12 SqM of Site Area</div>
<div class="r" style="left:60px;top:488px;width:1285px;height:25px;background:#dce6f1;"></div>
<div class="r" style="left:60px;top:718px;width:1285px;height:25px;background:#dce6f1;"></div>
<div class="t" style="left:92.00px;top:491px;font-size:17px;line-height:22px;color:#1f3a63;font-weight:700;">Revenues</div>
<div class="t" style="left:92.00px;top:721px;font-size:17px;line-height:22px;color:#1f3a63;font-weight:700;">Costs</div>
<div class="r" style="left:912px;top:446px;width:432px;height:2px;background:#d5e1f1;"></div>
<div class="r" style="left:1055px;top:446px;width:2px;height:44px;background:#d5e1f1;"></div>
<div class="r" style="left:1199px;top:446px;width:2px;height:44px;background:#d5e1f1;"></div>
<div class="r" style="left:1343px;top:446px;width:2px;height:44px;background:#d5e1f1;"></div>
<div class="r" style="left:768px;top:446px;width:145px;height:2px;background:#85abe0;"></div>
<div class="r" style="left:767px;top:446px;width:2px;height:44px;background:#85abe0;"></div>
<div class="r" style="left:911px;top:446px;width:2px;height:44px;background:#85abe0;"></div>
<div class="t" style="left:823.72px;top:450px;font-size:14.5px;line-height:19px;color:#111;font-weight:700;">Total</div>
<div class="t" style="left:824.29px;top:470px;font-size:14.5px;line-height:19px;color:#111;font-weight:700;">AUD</div>
<div class="t" style="left:956.39px;top:450px;font-size:14.5px;line-height:19px;color:#111;">AUD Per</div>
<div class="t" style="left:1100.39px;top:450px;font-size:14.5px;line-height:19px;color:#111;">AUD Per</div>
<div class="t" style="left:1244.39px;top:450px;font-size:14.5px;line-height:19px;color:#111;">AUD Per</div>
<div class="r" style="left:912px;top:466px;width:144px;height:24px;box-sizing:border-box;border:1px solid #8e8f8f;border-radius:3px;background:linear-gradient(#f6f6f6 0,#ebebeb 50%,#dddddd 51%,#d2d2d2 100%)"></div>
<div class="t" style="left:916.60px;top:469px;font-size:14.5px;line-height:19px;color:#000;transform:scaleX(.875);transform-origin:0 0;">Lot</div>
<svg style="left:1041.5px;top:475.0px" width="11" height="6"><path d="M0 0h10L5 5.5z" fill="#111"/></svg>
<div class="r" style="left:1056px;top:466px;width:144px;height:24px;box-sizing:border-box;border:1px solid #8e8f8f;border-radius:3px;background:linear-gradient(#f6f6f6 0,#ebebeb 50%,#dddddd 51%,#d2d2d2 100%)"></div>
<div class="t" style="left:1060.60px;top:469px;font-size:14.5px;line-height:19px;color:#000;transform:scaleX(.875);transform-origin:0 0;">SqM of Site Area</div>
<svg style="left:1185.5px;top:475.0px" width="11" height="6"><path d="M0 0h10L5 5.5z" fill="#111"/></svg>
<div class="r" style="left:1200px;top:466px;width:144px;height:24px;box-sizing:border-box;border:1px solid #8e8f8f;border-radius:3px;background:linear-gradient(#f6f6f6 0,#ebebeb 50%,#dddddd 51%,#d2d2d2 100%)"></div>
<div class="t" style="left:1204.60px;top:469px;font-size:14.5px;line-height:19px;color:#000;transform:scaleX(.875);transform-origin:0 0;">Total Net Revenue</div>
<svg style="left:1329.5px;top:475.0px" width="11" height="6"><path d="M0 0h10L5 5.5z" fill="#111"/></svg>
<div class="r" style="left:624px;top:508px;width:144px;height:24px;box-sizing:border-box;border:1px solid #8e8f8f;border-radius:3px;background:linear-gradient(#f6f6f6 0,#ebebeb 50%,#dddddd 51%,#d2d2d2 100%)"></div>
<div class="t" style="left:628.60px;top:511px;font-size:14.5px;line-height:19px;color:#000;transform:scaleX(.875);transform-origin:0 0;">AUD/Quantity</div>
<svg style="left:753.5px;top:517.0px" width="11" height="6"><path d="M0 0h10L5 5.5z" fill="#111"/></svg>
<div class="t" style="left:384.73px;top:514px;font-size:13.3px;line-height:17px;color:#111;">Quantity</div>
<div class="t" style="left:539.33px;top:514px;font-size:13.3px;line-height:17px;color:#111;">SqM</div>
<div class="t" style="left:367.59px;top:665px;font-size:13.3px;line-height:17px;color:#111;">Average Yield</div>
<div class="t" style="left:538.83px;top:665px;font-size:13.3px;line-height:17px;color:#111;">SqM</div>
<div class="t" style="left:644.77px;top:665px;font-size:13.3px;line-height:17px;color:#111;">AUD/SqM/annum</div>
<div class="t" style="left:10.40px;top:532px;font-size:13.2px;line-height:17px;color:#8b008b;letter-spacing:-0.050px;">Show</div>
<div class="t" style="left:91.40px;top:531px;font-size:14.5px;line-height:19px;color:#111;font-weight:700;letter-spacing:0.062px;">Gross Sales Revenue</div>
<div class="t" style="left:453.30px;top:531px;font-size:14.5px;line-height:19px;color:#111;">888</div>
<div class="t" style="left:603.58px;top:531px;font-size:14.5px;line-height:19px;color:#111;">-</div>
<div class="t" style="left:695.98px;top:531px;font-size:14.5px;line-height:19px;color:#111;">45,046.27</div>
<div class="t" style="left:831.42px;top:531px;font-size:14.5px;line-height:19px;color:#111;">40,001,090</div>
<div class="t" style="left:1003.64px;top:531px;font-size:14.5px;line-height:19px;color:#111;">90,093</div>
<div class="t" style="left:1175.86px;top:531px;font-size:14.5px;line-height:19px;color:#111;">80</div>
<div class="t" style="left:1290.81px;top:531px;font-size:14.5px;line-height:19px;color:#111;">103.5%</div>
<div class="t" style="left:170.06px;top:549px;font-size:14.5px;line-height:19px;color:#111;letter-spacing:0.027px;">Detached Dwelllings Lots</div>
<div class="t" style="left:453.30px;top:549px;font-size:14.5px;line-height:19px;color:#111;">442</div>
<div class="t" style="left:603.58px;top:549px;font-size:14.5px;line-height:19px;color:#111;">-</div>
<div class="t" style="left:695.98px;top:549px;font-size:14.5px;line-height:19px;color:#111;">89,029.40</div>
<div class="t" style="left:831.42px;top:549px;font-size:14.5px;line-height:19px;color:#111;">39,350,996</div>
<div class="t" style="left:214.07px;top:567px;font-size:14.5px;line-height:19px;color:#111;letter-spacing:0.028px;">Commercial Office</div>
<div class="t" style="left:469.42px;top:567px;font-size:14.5px;line-height:19px;color:#111;">2</div>
<div class="t" style="left:603.58px;top:567px;font-size:14.5px;line-height:19px;color:#111;">-</div>
<div class="t" style="left:687.92px;top:567px;font-size:14.5px;line-height:19px;color:#111;">325,047.40</div>
<div class="t" style="left:851.58px;top:567px;font-size:14.5px;line-height:19px;color:#111;">650,095</div>
<div class="t" style="left:243.71px;top:585px;font-size:14.5px;line-height:19px;color:#111;letter-spacing:0.026px;">Not Classified</div>
<div class="t" style="left:453.30px;top:585px;font-size:14.5px;line-height:19px;color:#111;">444</div>
<div class="t" style="left:603.58px;top:585px;font-size:14.5px;line-height:19px;color:#111;">-</div>
<div class="t" style="left:747.58px;top:585px;font-size:14.5px;line-height:19px;color:#111;">-</div>
<div class="t" style="left:890.66px;top:585px;font-size:14.5px;line-height:19px;color:#111;">-</div>
<div class="t" style="left:10.40px;top:604px;font-size:13.2px;line-height:17px;color:#8b008b;letter-spacing:-0.050px;">Show</div>
<div class="t" style="left:107.40px;top:603px;font-size:14.5px;line-height:19px;color:#111;letter-spacing:0.053px;">Less Selling Costs</div>
<div class="t" style="left:835.13px;top:603px;font-size:14.5px;line-height:19px;color:#111;">(1,368,532)</div>
<div class="t" style="left:1007.35px;top:603px;font-size:14.5px;line-height:19px;color:#111;">(3,082)</div>
<div class="t" style="left:1179.57px;top:603px;font-size:14.5px;line-height:19px;color:#111;">(3)</div>
<div class="t" style="left:1302.11px;top:603px;font-size:14.5px;line-height:19px;color:#111;">-3.5%</div>
<div class="t" style="left:10.40px;top:622px;font-size:13.2px;line-height:17px;color:#8b008b;letter-spacing:-0.050px;">Show</div>
<div class="t" style="left:107.40px;top:621px;font-size:14.5px;line-height:19px;color:#111;letter-spacing:0.057px;">Less Purchasers Costs</div>
<div class="t" style="left:890.66px;top:621px;font-size:14.5px;line-height:19px;color:#111;">-</div>
<div class="t" style="left:1034.66px;top:621px;font-size:14.5px;line-height:19px;color:#111;">-</div>
<div class="t" style="left:1178.66px;top:621px;font-size:14.5px;line-height:19px;color:#111;">-</div>
<div class="t" style="left:1306.94px;top:621px;font-size:14.5px;line-height:19px;color:#111;">0.0%</div>
<div class="t" style="left:10.40px;top:640px;font-size:13.2px;line-height:17px;color:#8b008b;letter-spacing:-0.050px;">Show</div>
<div class="t" style="left:91.40px;top:639px;font-size:14.5px;line-height:19px;color:#111;letter-spacing:0.072px;">NET SALES REVENUE</div>
<div class="t" style="left:831.42px;top:639px;font-size:14.5px;line-height:19px;color:#111;">38,632,559</div>
<div class="t" style="left:1003.64px;top:639px;font-size:14.5px;line-height:19px;color:#111;">87,010</div>
<div class="t" style="left:1175.86px;top:639px;font-size:14.5px;line-height:19px;color:#111;">77</div>
<div class="t" style="left:1290.81px;top:639px;font-size:14.5px;line-height:19px;color:#111;">100.0%</div>
<div class="t" style="left:91.50px;top:687px;font-size:14.5px;line-height:19px;color:#111;font-weight:700;letter-spacing:0.126px;">TOTAL REVENUE</div>
<div class="t" style="left:831.42px;top:687px;font-size:14.5px;line-height:19px;color:#111;font-weight:700;">38,632,559</div>
<div class="t" style="left:1003.64px;top:687px;font-size:14.5px;line-height:19px;color:#111;font-weight:700;">87,010</div>
<div class="t" style="left:1175.86px;top:687px;font-size:14.5px;line-height:19px;color:#111;font-weight:700;">77</div>
<div class="t" style="left:1290.81px;top:687px;font-size:14.5px;line-height:19px;color:#111;font-weight:700;">100.0%</div>
<div class="r" style="left:336px;top:529px;width:432px;height:2px;background:#d5e1f1;"></div>
<div class="r" style="left:336px;top:547px;width:432px;height:2px;background:#d5e1f1;"></div>
<div class="r" style="left:335px;top:529px;width:2px;height:73px;background:#d5e1f1;"></div>
<div class="r" style="left:479px;top:529px;width:2px;height:73px;background:#d5e1f1;"></div>
<div class="r" style="left:623px;top:529px;width:2px;height:73px;background:#d5e1f1;"></div>
<div class="r" style="left:768px;top:529px;width:577px;height:2px;background:#d5e1f1;"></div>
<div class="r" style="left:768px;top:547px;width:577px;height:2px;background:#d5e1f1;"></div>
<div class="r" style="left:89px;top:601px;width:1256px;height:2px;background:#d5e1f1;"></div>
<div class="r" style="left:89px;top:637px;width:1256px;height:2px;background:#d5e1f1;"></div>
<div class="r" style="left:89px;top:655px;width:1256px;height:2px;background:#d5e1f1;"></div>
<div class="r" style="left:336px;top:681px;width:1009px;height:2px;background:#d5e1f1;"></div>
<div class="r" style="left:1055px;top:529px;width:2px;height:128px;background:#d5e1f1;"></div>
<div class="r" style="left:1055px;top:681px;width:2px;height:37px;background:#d5e1f1;"></div>
<div class="r" style="left:1055px;top:743px;width:2px;height:240px;background:#d5e1f1;"></div>
<div class="r" style="left:1199px;top:529px;width:2px;height:128px;background:#d5e1f1;"></div>
<div class="r" style="left:1199px;top:681px;width:2px;height:37px;background:#d5e1f1;"></div>
<div class="r" style="left:1199px;top:743px;width:2px;height:240px;background:#d5e1f1;"></div>
<div class="r" style="left:1343px;top:529px;width:2px;height:128px;background:#d5e1f1;"></div>
<div class="r" style="left:1343px;top:681px;width:2px;height:37px;background:#d5e1f1;"></div>
<div class="r" style="left:1343px;top:743px;width:2px;height:240px;background:#d5e1f1;"></div>
<div class="r" style="left:62px;top:685px;width:1283px;height:2px;background:#85abe0;"></div>
<div class="r" style="left:62px;top:689px;width:1283px;height:2px;background:#85abe0;"></div>
<div class="r" style="left:767px;top:529px;width:2px;height:128px;background:#85abe0;"></div>
<div class="r" style="left:767px;top:690px;width:2px;height:28px;background:#85abe0;"></div>
<div class="r" style="left:767px;top:743px;width:2px;height:240px;background:#85abe0;"></div>
<div class="r" style="left:911px;top:529px;width:2px;height:128px;background:#85abe0;"></div>
<div class="r" style="left:911px;top:690px;width:2px;height:28px;background:#85abe0;"></div>
<div class="r" style="left:911px;top:743px;width:2px;height:240px;background:#85abe0;"></div>
<div class="t" style="left:10.40px;top:743px;font-size:13.2px;line-height:17px;color:#8b008b;letter-spacing:-0.050px;">Show</div>
<div class="t" style="left:91.40px;top:742px;font-size:14.5px;line-height:19px;color:#111;letter-spacing:0.058px;">Land Purchase Cost</div>
<div class="t" style="left:839.48px;top:742px;font-size:14.5px;line-height:19px;color:#111;">5,000,000</div>
<div class="t" style="left:1004.72px;top:742px;font-size:14.5px;line-height:19px;color:#111;">11,261</div>
<div class="t" style="left:1175.86px;top:742px;font-size:14.5px;line-height:19px;color:#111;">10</div>
<div class="t" style="left:1298.88px;top:742px;font-size:14.5px;line-height:19px;color:#111;">12.9%</div>
<div class="t" style="left:10.40px;top:760px;font-size:13.2px;line-height:17px;color:#8b008b;letter-spacing:-0.050px;">Show</div>
<div class="t" style="left:91.40px;top:759px;font-size:14.5px;line-height:19px;color:#111;letter-spacing:0.053px;">Land Acquisition Costs</div>
<div class="t" style="left:851.58px;top:759px;font-size:14.5px;line-height:19px;color:#111;">316,415</div>
<div class="t" style="left:1023.80px;top:759px;font-size:14.5px;line-height:19px;color:#111;">713</div>
<div class="t" style="left:1183.92px;top:759px;font-size:14.5px;line-height:19px;color:#111;">1</div>
<div class="t" style="left:1306.94px;top:759px;font-size:14.5px;line-height:19px;color:#111;">0.8%</div>
<div class="t" style="left:10.40px;top:777px;font-size:13.2px;line-height:17px;color:#8b008b;letter-spacing:-0.050px;">Show</div>
<div class="t" style="left:91.40px;top:776px;font-size:14.5px;line-height:19px;color:#111;font-weight:700;letter-spacing:0.057px;">Construction Costs (inc. Contingency)</div>
<div class="t" style="left:831.42px;top:776px;font-size:14.5px;line-height:19px;color:#111;">18,645,000</div>
<div class="t" style="left:1003.64px;top:776px;font-size:14.5px;line-height:19px;color:#111;">41,993</div>
<div class="t" style="left:1175.86px;top:776px;font-size:14.5px;line-height:19px;color:#111;">37</div>
<div class="t" style="left:1298.88px;top:776px;font-size:14.5px;line-height:19px;color:#111;">48.3%</div>
<div class="t" style="left:217.82px;top:793px;font-size:14.5px;line-height:19px;color:#111;letter-spacing:0.027px;">Subdivision Costs</div>
<div class="t" style="left:831.42px;top:793px;font-size:14.5px;line-height:19px;color:#111;">16,950,000</div>
<div class="t" style="left:1003.64px;top:793px;font-size:14.5px;line-height:19px;color:#111;">38,176</div>
<div class="t" style="left:1175.86px;top:793px;font-size:14.5px;line-height:19px;color:#111;">34</div>
<div class="t" style="left:1298.88px;top:793px;font-size:14.5px;line-height:19px;color:#111;">43.9%</div>
<div class="t" style="left:252.60px;top:810px;font-size:14.5px;line-height:19px;color:#111;letter-spacing:0.029px;">Contingency</div>
<div class="t" style="left:839.48px;top:810px;font-size:14.5px;line-height:19px;color:#111;">1,695,000</div>
<div class="t" style="left:1011.70px;top:810px;font-size:14.5px;line-height:19px;color:#111;">3,818</div>
<div class="t" style="left:1183.92px;top:810px;font-size:14.5px;line-height:19px;color:#111;">3</div>
<div class="t" style="left:1306.94px;top:810px;font-size:14.5px;line-height:19px;color:#111;">4.4%</div>
<div class="t" style="left:10.40px;top:828px;font-size:13.2px;line-height:17px;color:#8b008b;letter-spacing:-0.050px;">Show</div>
<div class="t" style="left:91.40px;top:827px;font-size:14.5px;line-height:19px;color:#111;letter-spacing:0.055px;">Professional Fees</div>
<div class="t" style="left:839.48px;top:827px;font-size:14.5px;line-height:19px;color:#111;">4,375,048</div>
<div class="t" style="left:1011.70px;top:827px;font-size:14.5px;line-height:19px;color:#111;">9,854</div>
<div class="t" style="left:1183.92px;top:827px;font-size:14.5px;line-height:19px;color:#111;">9</div>
<div class="t" style="left:1299.95px;top:827px;font-size:14.5px;line-height:19px;color:#111;">11.3%</div>
<div class="t" style="left:10.40px;top:845px;font-size:13.2px;line-height:17px;color:#8b008b;letter-spacing:-0.050px;">Show</div>
<div class="t" style="left:91.40px;top:844px;font-size:14.5px;line-height:19px;color:#111;letter-spacing:0.054px;">Soft Costs and Operations</div>
<div class="t" style="left:851.58px;top:844px;font-size:14.5px;line-height:19px;color:#111;">200,000</div>
<div class="t" style="left:1023.80px;top:844px;font-size:14.5px;line-height:19px;color:#111;">450</div>
<div class="t" style="left:1183.92px;top:844px;font-size:14.5px;line-height:19px;color:#111;">0</div>
<div class="t" style="left:1306.94px;top:844px;font-size:14.5px;line-height:19px;color:#111;">0.5%</div>
<div class="t" style="left:10.40px;top:862px;font-size:13.2px;line-height:17px;color:#8b008b;letter-spacing:-0.050px;">Show</div>
<div class="t" style="left:91.40px;top:861px;font-size:14.5px;line-height:19px;color:#111;letter-spacing:0.055px;">Miscellaneous Costs 1</div>
<div class="t" style="left:890.66px;top:861px;font-size:14.5px;line-height:19px;color:#111;">-</div>
<div class="t" style="left:1034.66px;top:861px;font-size:14.5px;line-height:19px;color:#111;">-</div>
<div class="t" style="left:1178.66px;top:861px;font-size:14.5px;line-height:19px;color:#111;">-</div>
<div class="t" style="left:1306.94px;top:861px;font-size:14.5px;line-height:19px;color:#111;">0.0%</div>
<div class="t" style="left:10.40px;top:879px;font-size:13.2px;line-height:17px;color:#8b008b;letter-spacing:-0.050px;">Show</div>
<div class="t" style="left:91.40px;top:878px;font-size:14.5px;line-height:19px;color:#111;letter-spacing:0.055px;">Miscellaneous Costs 2</div>
<div class="t" style="left:890.66px;top:878px;font-size:14.5px;line-height:19px;color:#111;">-</div>
<div class="t" style="left:1034.66px;top:878px;font-size:14.5px;line-height:19px;color:#111;">-</div>
<div class="t" style="left:1178.66px;top:878px;font-size:14.5px;line-height:19px;color:#111;">-</div>
<div class="t" style="left:1306.94px;top:878px;font-size:14.5px;line-height:19px;color:#111;">0.0%</div>
<div class="t" style="left:10.40px;top:896px;font-size:13.2px;line-height:17px;color:#8b008b;letter-spacing:-0.050px;">Show</div>
<div class="t" style="left:91.40px;top:895px;font-size:14.5px;line-height:19px;color:#111;letter-spacing:0.055px;">Miscellaneous Costs 3</div>
<div class="t" style="left:890.66px;top:895px;font-size:14.5px;line-height:19px;color:#111;">-</div>
<div class="t" style="left:1034.66px;top:895px;font-size:14.5px;line-height:19px;color:#111;">-</div>
<div class="t" style="left:1178.66px;top:895px;font-size:14.5px;line-height:19px;color:#111;">-</div>
<div class="t" style="left:1306.94px;top:895px;font-size:14.5px;line-height:19px;color:#111;">0.0%</div>
<div class="t" style="left:10.40px;top:913px;font-size:13.2px;line-height:17px;color:#8b008b;letter-spacing:-0.050px;">Show</div>
<div class="t" style="left:91.40px;top:912px;font-size:14.5px;line-height:19px;color:#111;letter-spacing:0.054px;">Project Contingency (Reserve)</div>
<div class="t" style="left:839.48px;top:912px;font-size:14.5px;line-height:19px;color:#111;">1,183,200</div>
<div class="t" style="left:1011.70px;top:912px;font-size:14.5px;line-height:19px;color:#111;">2,665</div>
<div class="t" style="left:1183.92px;top:912px;font-size:14.5px;line-height:19px;color:#111;">2</div>
<div class="t" style="left:1306.94px;top:912px;font-size:14.5px;line-height:19px;color:#111;">3.1%</div>
<div class="t" style="left:10.40px;top:930px;font-size:13.2px;line-height:17px;color:#8b008b;letter-spacing:-0.050px;">Show</div>
<div class="t" style="left:91.40px;top:929px;font-size:14.5px;line-height:19px;color:#111;letter-spacing:0.056px;">Land Holding Costs</div>
<div class="t" style="left:851.58px;top:929px;font-size:14.5px;line-height:19px;color:#111;">138,571</div>
<div class="t" style="left:1023.80px;top:929px;font-size:14.5px;line-height:19px;color:#111;">312</div>
<div class="t" style="left:1183.92px;top:929px;font-size:14.5px;line-height:19px;color:#111;">0</div>
<div class="t" style="left:1306.94px;top:929px;font-size:14.5px;line-height:19px;color:#111;">0.4%</div>
<div class="t" style="left:10.40px;top:947px;font-size:13.2px;line-height:17px;color:#8b008b;letter-spacing:-0.050px;">Show</div>
<div class="t" style="left:91.40px;top:946px;font-size:14.5px;line-height:19px;color:#111;letter-spacing:0.059px;">Pre-Sale Commissions</div>
<div class="t" style="left:839.48px;top:946px;font-size:14.5px;line-height:19px;color:#111;">1,193,532</div>
<div class="t" style="left:1011.70px;top:946px;font-size:14.5px;line-height:19px;color:#111;">2,688</div>
<div class="t" style="left:1183.92px;top:946px;font-size:14.5px;line-height:19px;color:#111;">2</div>
<div class="t" style="left:1306.94px;top:946px;font-size:14.5px;line-height:19px;color:#111;">3.1%</div>
<div class="t" style="left:10.40px;top:964px;font-size:13.2px;line-height:17px;color:#8b008b;letter-spacing:-0.050px;">Show</div>
<div class="t" style="left:91.40px;top:963px;font-size:14.5px;line-height:19px;color:#111;letter-spacing:0.054px;">Finance Charges (inc. Fees)</div>
<div class="t" style="left:890.66px;top:963px;font-size:14.5px;line-height:19px;color:#111;">-</div>
<div class="t" style="left:1034.66px;top:963px;font-size:14.5px;line-height:19px;color:#111;">-</div>
<div class="t" style="left:1178.66px;top:963px;font-size:14.5px;line-height:19px;color:#111;">-</div>
<div class="t" style="left:1306.94px;top:963px;font-size:14.5px;line-height:19px;color:#111;">0.0%</div>
<div class="r" style="left:89px;top:792px;width:1256px;height:2px;background:#d5e1f1;"></div>
<div class="r" style="left:89px;top:826px;width:1256px;height:2px;background:#d5e1f1;"></div>
<svg style="left:70px;top:210px" width="14" height="18" viewBox="0 0 14 18"><path d="M6.6 1.6 L12.3 16.6 L7.6 11.2 L1.4 14.2 Z" fill="#fff"/></svg>
<div class="t" style="left:83.30px;top:211px;font-size:13.8px;line-height:18px;color:#fff;letter-spacing:0.104px;-webkit-text-stroke:0.45px #fff;">ARGUS</div>
<div class="t" style="left:137.00px;top:210px;font-size:14.5px;line-height:19px;color:#c3d1e4;letter-spacing:0.248px;">EstateMaster</div>
<div class="r" style="left:232px;top:209px;width:1px;height:21px;background:#8fa8ca;"></div>
<div class="t" style="left:242.30px;top:206px;font-size:12.4px;line-height:16px;color:#fff;letter-spacing:0.544px;">Development</div>
<div class="t" style="left:242.30px;top:217px;font-size:12.4px;line-height:16px;color:#fff;letter-spacing:0.291px;">Feasibility</div>
<div class="r" style="left:0px;top:983px;width:1363px;height:20px;background:#f0f0f0;"></div>
<div class="r" style="left:0px;top:982px;width:1357px;height:1px;background:#9b9b9b;"></div>
<div class="r" style="left:399px;top:982px;width:81px;height:1px;background:#fff;"></div>
<div class="r" style="left:0px;top:1002px;width:1363px;height:2px;background:#a0a0a0;"></div>
<div class="r" style="left:0px;top:1004px;width:1363px;height:2px;background:#f4f4f4;"></div>
<svg style="left:0;top:983px" width="1363" height="20" viewBox="0 0 1363 20"><path d="M398.5 0L405.5 19.5H473L480.5 0Z" fill="#fff"/><path d="M84.5 0V20" stroke="#8c8c8c"/><path d="M85.5 0L92.5 19.5" stroke="#8c8c8c" fill="none"/><path d="M137.3 0L130.1 19.5" stroke="#8c8c8c" fill="none"/><path d="M184.3 0L177.2 19.5" stroke="#8c8c8c" fill="none"/><path d="M259.4 0L252.2 19.5" stroke="#8c8c8c" fill="none"/><path d="M330.6 0L323.4 19.5" stroke="#8c8c8c" fill="none"/><path d="M400.1 0L407.4 19.5" stroke="#777" fill="none"/><path d="M482.2 0L475.0 19.5" stroke="#8c8c8c" fill="none"/><path d="M536.5 0L529.3 19.5" stroke="#8c8c8c" fill="none"/><path d="M625.6 0L618.4 19.5" stroke="#8c8c8c" fill="none"/><path d="M704.2 0L697.0 19.5" stroke="#8c8c8c" fill="none"/><path d="M786.2 0L779.0 19.5" stroke="#8c8c8c" fill="none"/><path d="M851.0 0L843.8 19.5" stroke="#8c8c8c" fill="none"/><path d="M963.5 0L956.3 19.5" stroke="#8c8c8c" fill="none"/></svg>
<div class="t" style="left:95.60px;top:984px;font-size:15.3px;line-height:20px;color:#111;letter-spacing:0.358px;">Intro</div>
<div class="t" style="left:139.40px;top:984px;font-size:15.3px;line-height:20px;color:#111;letter-spacing:0.414px;">Input</div>
<div class="t" style="left:186.00px;top:984px;font-size:15.3px;line-height:20px;color:#111;letter-spacing:-0.502px;">CashFlow</div>
<div class="t" style="left:261.60px;top:984px;font-size:15.3px;line-height:20px;color:#111;letter-spacing:-0.578px;">Stage CF</div>
<div class="t" style="left:332.40px;top:984px;font-size:15.3px;line-height:20px;color:#111;letter-spacing:-0.307px;">Financials</div>
<div class="t" style="left:409.30px;top:984px;font-size:15.3px;line-height:20px;color:#111;letter-spacing:-0.322px;">Summary</div>
<div class="t" style="left:484.80px;top:984px;font-size:15.3px;line-height:20px;color:#111;letter-spacing:-0.394px;">Charts</div>
<div class="t" style="left:538.30px;top:984px;font-size:15.3px;line-height:20px;color:#111;letter-spacing:-0.254px;">Consolidate</div>
<div class="t" style="left:627.60px;top:984px;font-size:15.3px;line-height:20px;color:#111;letter-spacing:-0.187px;">Sensitivity</div>
<div class="t" style="left:706.80px;top:984px;font-size:15.3px;line-height:20px;color:#111;letter-spacing:-0.129px;">Probability</div>
<div class="t" style="left:788.50px;top:984px;font-size:15.3px;line-height:20px;color:#111;letter-spacing:-0.516px;">S-Curve</div>
<div class="t" style="left:853.70px;top:984px;font-size:15.3px;line-height:20px;color:#111;letter-spacing:-0.095px;">Taxes &amp; Duties</div>
<svg style="left:0;top:983px" width="90" height="20" viewBox="0 0 90 20"><g fill="#111"><rect x="8.4" y="5.4" width="1.6" height="8.8"/><path d="M16.4 5.4V14.2L10.6 9.8Z"/><path d="M36.3 5.4V14.2L30.6 9.8Z"/><path d="M50.6 5.4V14.2L56.3 9.8Z"/><path d="M70.9 5.4V14.2L76.6 9.8Z"/><rect x="76.8" y="5.4" width="1.6" height="8.8"/></g></svg>
</body></html>
